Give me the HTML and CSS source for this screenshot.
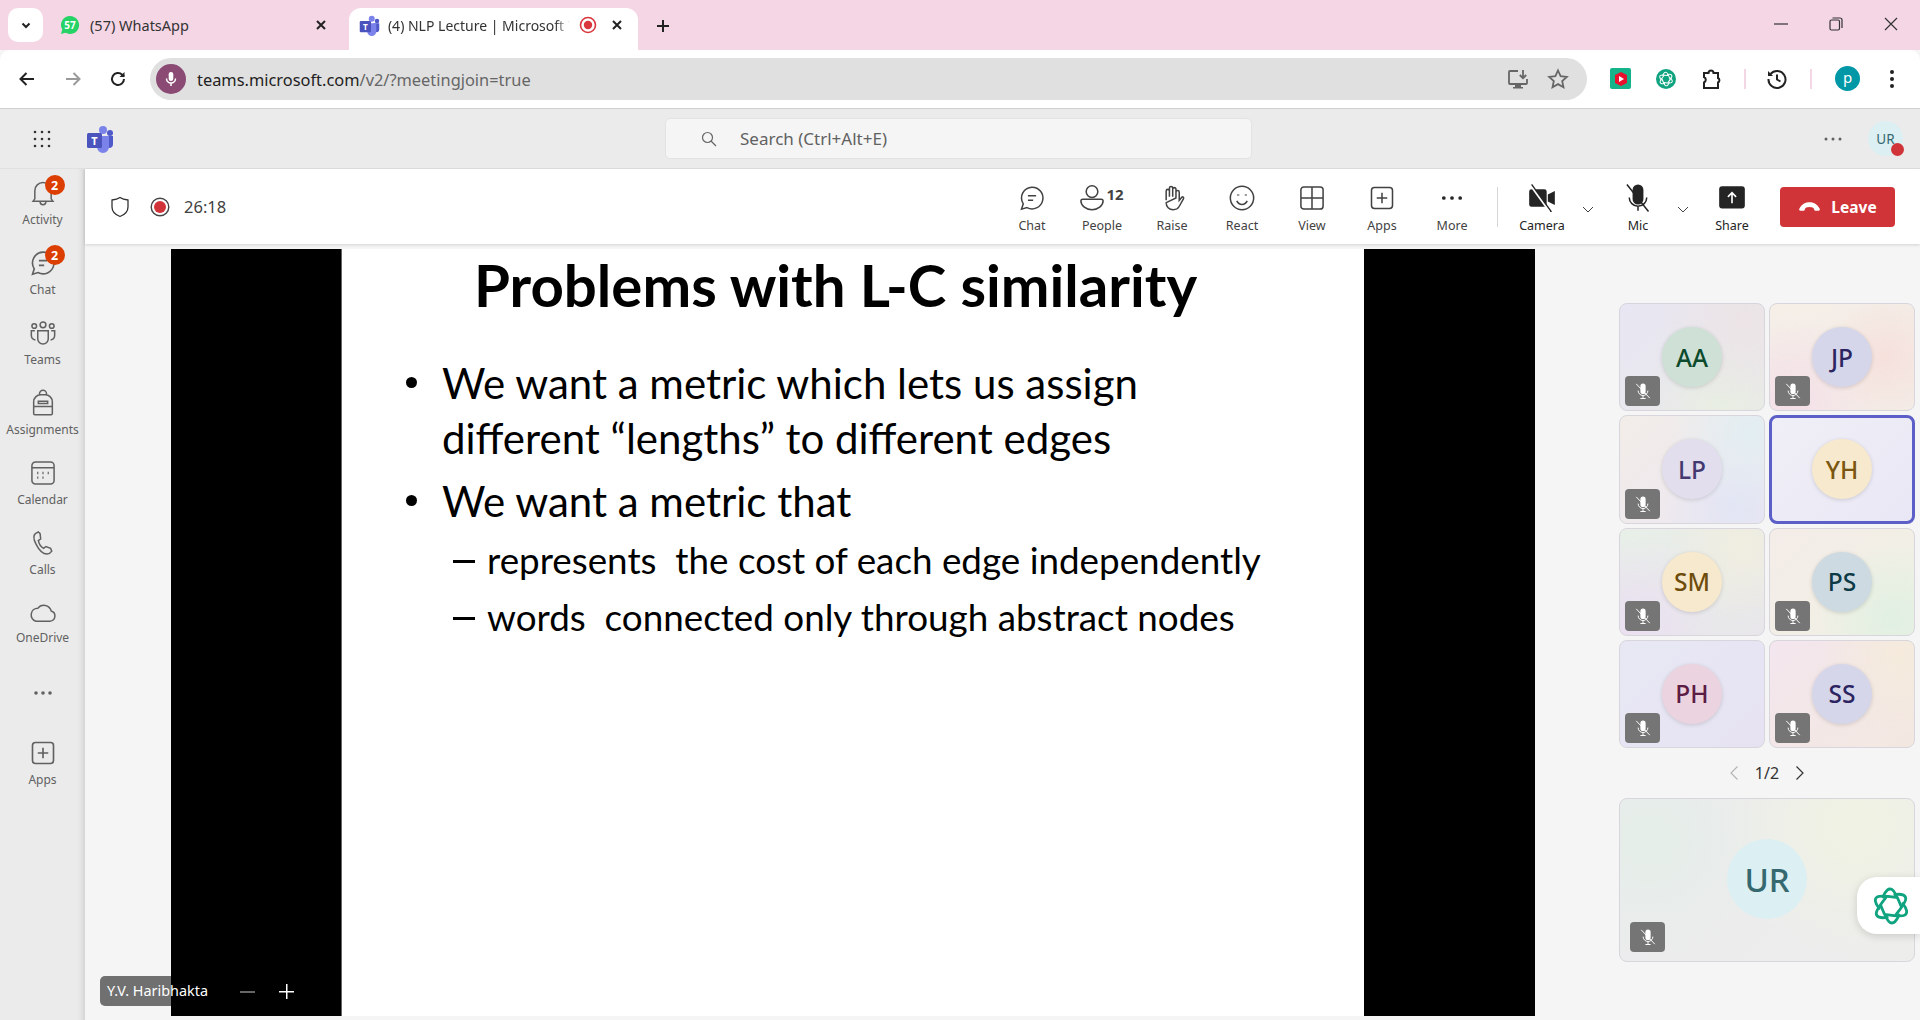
FILE: index.html
```html
<!DOCTYPE html>
<html lang="en">
<head>
<meta charset="utf-8">
<title>NLP Lecture | Microsoft Teams</title>
<link rel="stylesheet" href="styles.css">
</head>
<body>
<svg class="defs" aria-hidden="true">
  <symbol id="micoff" viewBox="0 0 24 24"><path d="M8.500 5.500a3.500 3.500 0 0 1 7 0v7a3.500 3.500 0 0 1-7 0z" fill="currentColor" stroke="none"/><path d="M5.500 11.500a6.500 6.500 0 0 0 13 0M12 18v4M8.500 22h7M3 2.500l18 19" fill="none" stroke="currentColor" stroke-width="1.300"/></symbol>
  <symbol id="chat" viewBox="0 0 24 24"><path d="M12 2.700a9.300 9.300 0 1 1-4.300 17.500l-4.700 1.400 1.500-4.600A9.300 9.300 0 0 1 12 2.700z"/><path d="M8.500 10h7M8.500 14h4.500"/></symbol>
  <symbol id="plus-box" viewBox="0 0 24 24"><rect x="3" y="3" width="18" height="18" rx="2.500"/><path d="M12 7.500v9M7.500 12h9"/></symbol>
  <symbol id="knot" viewBox="0 0 40 40"><g stroke-linecap="round"><path d="M12 11Q16 1 21 3.500Q24 5 30 20"/><path d="M12 11Q16 1 21 3.500Q24 5 30 20" transform="rotate(60 20 20)"/><path d="M12 11Q16 1 21 3.500Q24 5 30 20" transform="rotate(120 20 20)"/><path d="M12 11Q16 1 21 3.500Q24 5 30 20" transform="rotate(180 20 20)"/><path d="M12 11Q16 1 21 3.500Q24 5 30 20" transform="rotate(240 20 20)"/><path d="M12 11Q16 1 21 3.500Q24 5 30 20" transform="rotate(300 20 20)"/></g></symbol>
</svg>

<header class="tabstrip">
  <button class="tab-list"><svg class="i12" viewBox="0 0 12 12"><path d="M2.500 4.500 6 8l3.500-3.500" class="s-dark2"/></svg></button>
  <div class="tab">
    <svg class="fav" viewBox="0 0 20 20"><path d="M10 1a9 9 0 1 1-4.400 16.800L1 19l1.300-4.400A9 9 0 0 1 10 1z" fill="#25d366"/><text x="10" y="13.500" class="fav-num">57</text></svg>
    <span class="tab-title">(57) WhatsApp</span>
    <svg class="i12 tab-x" viewBox="0 0 12 12"><path d="M2 2l8 8M10 2l-8 8" class="s-dark2"/></svg>
  </div>
  <div class="tab tab-active">
    <svg class="fav-t" viewBox="0 0 28 28"><circle cx="17" cy="5" r="4" fill="#7b83eb"/><circle cx="24" cy="8" r="3" fill="#5059c9"/><path d="M19 11h8v8a4 4 0 0 1-8 0z" fill="#5059c9"/><path d="M9 11h14v11a6 6 0 0 1-12 0z" fill="#7b83eb"/><rect x="1" y="8" width="15" height="15" rx="1.500" fill="#4b53bc"/><text x="8.500" y="20" class="teams-t">T</text></svg>
    <span class="tab-title tab-fade">(4) NLP Lecture | Microsoft T</span>
    <svg class="rec" viewBox="0 0 18 18"><circle cx="9" cy="9" r="7.500" fill="none" stroke="#d9363e" stroke-width="1.600"/><circle cx="9" cy="9" r="4.200" fill="#d9363e"/></svg>
    <svg class="i12 tab-x2" viewBox="0 0 12 12"><path d="M2 2l8 8M10 2l-8 8" class="s-dark2"/></svg>
  </div>
  <svg class="i14 new-tab" viewBox="0 0 14 14"><path d="M7 1v12M1 7h12" class="s-dark2"/></svg>
  <div class="win">
    <svg class="i14" viewBox="0 0 14 14"><path d="M0 7h14" class="s-thin"/></svg>
    <svg class="i14" viewBox="0 0 14 14"><rect x="1" y="3" width="9.500" height="10" rx="1.500" class="s-thin"/><path d="M3.500 1H11a2 2 0 0 1 2 2v8" class="s-thin"/></svg>
    <svg class="i14" viewBox="0 0 14 14"><path d="M1 1l12 12M13 1 1 13" class="s-thin"/></svg>
  </div>
</header>

<nav class="toolbar">
  <svg class="nav-ic nav-back" viewBox="0 0 18 18"><path d="M16 9H3M8.500 3 2.500 9l6 6" class="s-dark2"/></svg>
  <svg class="nav-ic nav-fwd" viewBox="0 0 18 18"><path d="M2 9h13M9.500 3l6 6-6 6" class="s-grey2"/></svg>
  <svg class="nav-ic nav-rel" viewBox="0 0 18 18"><path d="M15 9a6 6 0 1 1-1.800-4.300L15 6.500" class="s-dark2"/><path d="M15.500 2v5h-5z" fill="#222"/></svg>
  <div class="omni">
    <span class="omni-mic"><svg class="i18" viewBox="0 0 18 18"><rect x="6.700" y="2" width="4.600" height="9" rx="2.300" fill="#fff"/><path d="M4.500 8.500a4.500 4.500 0 0 0 9 0M9 13v3" class="s-white"/></svg></span>
    <span class="url"><b>teams.microsoft.com</b>/v2/?meetingjoin=true</span>
    <svg class="omni-ic" viewBox="0 0 22 22"><path d="M11 3H3a1 1 0 0 0-1 1v11a1 1 0 0 0 1 1h16a1 1 0 0 0 1-1v-4" class="s-grey3"/><path d="M6 19h10v1.500H6zM8 16h6v3H8z" fill="#666"/><path d="M16 2v8M12.800 7l3.200 3.200L19.200 7" class="s-grey3"/></svg>
    <svg class="omni-ic omni-star" viewBox="0 0 22 22"><path d="m11 2.500 2.600 5.700 6.200.7-4.600 4.200 1.300 6.100-5.500-3.100-5.500 3.100 1.300-6.100-4.600-4.200 6.200-.7z" class="s-grey3"/></svg>
  </div>
  <div class="ext">
    <span class="ext-yt"><svg class="i14" viewBox="0 0 14 14"><path d="M7 0l6 3v8l-6 3-6-3V3z" fill="#e8112d"/><path d="M5 4l5 3-5 3z" fill="#fff"/></svg></span>
    <span class="ext-gpt"><svg class="knot-w"><use href="#knot"/></svg></span>
    <svg class="ext-ic" viewBox="0 0 22 22"><path d="M4 5h4.500a2.500 2.500 0 0 1 5 0H18v5a2.500 2.500 0 0 1 0 4.500V20H4v-5.500a3 3 0 0 0 0-5.500z" class="s-dark2"/></svg>
    <i class="ext-div ext-div1"></i>
    <svg class="ext-ic" viewBox="0 0 22 22"><path d="M4.500 6A8.500 8.500 0 1 1 2.500 11" class="s-dark2"/><path d="M2 3v5h5z" fill="#222"/><path d="M11 6.500V11.500l3.500 2" class="s-dark2"/></svg>
    <i class="ext-div ext-div2"></i>
    <span class="profile">p</span>
    <svg class="dots-v" viewBox="0 0 6 20"><circle cx="3" cy="3" r="2"/><circle cx="3" cy="10" r="2"/><circle cx="3" cy="17" r="2"/></svg>
  </div>
</nav>

<div class="apphead">
  <svg class="waffle" viewBox="0 0 20 20"><g class="fill-dark"><circle cx="3" cy="3" r="1.300"/><circle cx="10" cy="3" r="1.300"/><circle cx="17" cy="3" r="1.300"/><circle cx="3" cy="10" r="1.300"/><circle cx="10" cy="10" r="1.300"/><circle cx="17" cy="10" r="1.300"/><circle cx="3" cy="17" r="1.300"/><circle cx="10" cy="17" r="1.300"/><circle cx="17" cy="17" r="1.300"/></g></svg>
  <svg class="teams-logo" viewBox="0 0 28 28"><circle cx="17" cy="5" r="4" fill="#7b83eb"/><circle cx="24" cy="8" r="3" fill="#5059c9"/><path d="M19 11h8v8a4 4 0 0 1-8 0z" fill="#5059c9"/><path d="M9 11h14v11a6 6 0 0 1-12 0z" fill="#7b83eb"/><rect x="1" y="8" width="15" height="15" rx="1.500" fill="#4b53bc"/><text x="8.500" y="20" class="teams-t">T</text></svg>
  <div class="search">
    <svg class="i18" viewBox="0 0 18 18"><circle cx="7.500" cy="7.500" r="5" class="s-grey1"/><path d="m11 11 5 5" class="s-grey1"/></svg>
    <span>Search (Ctrl+Alt+E)</span>
  </div>
  <svg class="head-more" viewBox="0 0 18 4"><circle cx="2" cy="2" r="1.500"/><circle cx="9" cy="2" r="1.500"/><circle cx="16" cy="2" r="1.500"/></svg>
  <div class="head-av">UR<i class="head-dot"></i></div>
</div>

<div class="main">
  <aside class="rail">
    <div class="rail-item"><span class="rail-ic">
      <svg class="ic-28" viewBox="0 0 24 24"><path d="M5 17V10a7 7 0 0 1 14 0v7l1.500 2h-17zM9.500 19.500a2.500 2.500 0 0 0 5 0"/></svg><b class="badge">2</b></span><span class="rail-lab">Activity</span></div>
    <div class="rail-item"><span class="rail-ic"><svg class="ic-28 stroke-use"><use href="#chat"/></svg><b class="badge">2</b></span><span class="rail-lab">Chat</span></div>
    <div class="rail-item"><span class="rail-ic"><svg class="ic-28" viewBox="0 0 24 24"><circle cx="12" cy="5" r="2.500"/><circle cx="4.500" cy="6" r="2"/><circle cx="19.500" cy="6" r="2"/><path d="M7.500 10h9v7a4.500 4.500 0 0 1-9 0zM5 10H2v4a4 4 0 0 0 3.500 4M19 10h3v4a4 4 0 0 1-3.500 4"/></svg></span><span class="rail-lab">Teams</span></div>
    <div class="rail-item"><span class="rail-ic"><svg class="ic-28" viewBox="0 0 24 24"><path d="M9 5.500V4a3 3 0 0 1 6 0v1.500M4 21V11a6 6 0 0 1 6-6h4a6 6 0 0 1 6 6v10a1 1 0 0 1-1 1H5a1 1 0 0 1-1-1zM4 15h16M8 10.500h8v2H8z"/></svg></span><span class="rail-lab">Assignments</span></div>
    <div class="rail-item"><span class="rail-ic"><svg class="ic-28" viewBox="0 0 24 24"><rect x="2.500" y="2.500" width="19" height="19" rx="3"/><path d="M2.500 7.500h19"/><path d="M7 12h1M11.500 12h1M16 12h1M7 16h1M11.500 16h1" stroke-width="2"/></svg></span><span class="rail-lab">Calendar</span></div>
    <div class="rail-item"><span class="rail-ic"><svg class="ic-28" viewBox="0 0 24 24"><path d="M8 2.500 5.500 4C3.500 5.500 4 9 6 13c2.500 5 6 8.500 9.500 8.500 1.500 0 3-1 4-2.500l-1-2.500-4-1.500-2 1.500c-2-1-4-4-4.500-6.500l2-1.500L9.500 4z"/></svg></span><span class="rail-lab">Calls</span></div>
    <div class="rail-item rail-cloud"><span class="rail-ic"><svg class="ic-28" viewBox="0 0 24 24"><path d="M6 19h12a4.500 4.500 0 0 0 1-8.800A6.500 6.500 0 0 0 7.500 8 5.600 5.600 0 0 0 6 19z"/></svg></span><span class="rail-lab">OneDrive</span></div>
    <div class="rail-dots"><svg class="head-more" viewBox="0 0 18 4"><circle cx="2" cy="2" r="1.800"/><circle cx="9" cy="2" r="1.800"/><circle cx="16" cy="2" r="1.800"/></svg></div>
    <div class="rail-item rail-apps"><span class="rail-ic"><svg class="ic-28 stroke-use"><use href="#plus-box"/></svg></span><span class="rail-lab">Apps</span></div>
  </aside>

  <section class="content">
    <div class="meetbar">
      <div class="meet-left">
        <svg class="shield" viewBox="0 0 20 22"><path d="M10 1.500c2 1.500 5 2.300 8 2.500v7c0 5-4 8-8 9.500-4-1.500-8-4.500-8-9.500V4c3-.2 6-1 8-2.500z"/></svg>
        <svg class="meet-rec" viewBox="0 0 20 20"><circle cx="10" cy="10" r="8.800" fill="none" stroke="#444" stroke-width="1.400"/><circle cx="10" cy="10" r="6" fill="#d13438"/></svg>
        <span class="timer">26:18</span>
      </div>
      <div class="meet-right">
        <div class="mt"><svg class="mt-ic stroke-use"><use href="#chat"/></svg><span>Chat</span></div>
        <div class="mt"><span class="mt-top"><svg class="mt-ic" viewBox="0 0 24 24"><circle cx="12" cy="6.500" r="5"/><path d="M2.500 14.500a1.500 1.500 0 0 1 1.500-1.500h16a1.500 1.500 0 0 1 1.500 1.500c0 4-4.500 7.500-9.500 7.500s-9.500-3.500-9.500-7.500z"/></svg><b class="count">12</b></span><span>People</span></div>
        <div class="mt"><svg class="mt-ic" viewBox="0 0 24 24"><path d="M7 14V6a1.400 1.400 0 0 1 2.800 0v5M9.800 11V3.500a1.400 1.400 0 0 1 2.800 0V11M12.600 11V4.500a1.400 1.400 0 0 1 2.800 0V12M15.400 12V7a1.400 1.400 0 0 1 2.800 0v7l2-2.500c1-1 2.300 0 1.600 1.200L18 19.500c-1 1.800-2.500 2.500-5 2.500-3.500 0-6-2.500-6-6z"/></svg><span>Raise</span></div>
        <div class="mt"><svg class="mt-ic" viewBox="0 0 24 24"><circle cx="12" cy="12" r="10"/><path d="M7.500 14.500c1 2 2.700 3 4.500 3s3.500-1 4.500-3"/><path d="M8.700 9v.8M15.300 9v.8" stroke-width="2"/></svg><span>React</span></div>
        <div class="mt"><svg class="mt-ic" viewBox="0 0 24 24"><rect x="2.500" y="2.500" width="19" height="19" rx="2.500"/><path d="M12 2.500v19M2.500 12h19"/></svg><span>View</span></div>
        <div class="mt"><svg class="mt-ic stroke-use"><use href="#plus-box"/></svg><span>Apps</span></div>
        <div class="mt"><svg class="mt-ic mt-solid" viewBox="0 0 24 24"><circle cx="5" cy="12" r="1.600"/><circle cx="12" cy="12" r="1.600"/><circle cx="19" cy="12" r="1.600"/></svg><span>More</span></div>
        <i class="mt-div"></i>
        <div class="mt mt-cam"><svg class="mt-ic mt-solid" viewBox="0 0 24 24"><path d="M1 6.500a2 2 0 0 1 2-2h11a2 2 0 0 1 2 2v11a2 2 0 0 1-2 2H3a2 2 0 0 1-2-2zM17 9l6-3v12l-6-3z"/><path d="M3 .5 20 24" class="cut"/><path d="M1.500 .5 18.500 24" class="cut-w"/></svg><span>Camera</span></div>
        <svg class="mt-chev" viewBox="0 0 12 8"><path d="M1 1l5 5 5-5"/></svg>
        <div class="mt mt-mic"><svg class="mt-ic" viewBox="0 0 24 24"><path d="M8 5a4 4 0 0 1 8 0v8a4 4 0 0 1-8 0z" class="mic-f"/><path d="M4.500 11.500a7.500 7.500 0 0 0 15 0M12 19v4M2.500 .5 21 23.500"/></svg><span>Mic</span></div>
        <svg class="mt-chev" viewBox="0 0 12 8"><path d="M1 1l5 5 5-5"/></svg>
        <div class="mt mt-share"><svg class="mt-ic mt-solid" viewBox="0 0 24 24"><rect x="1" y="2" width="22" height="19" rx="2.500" fill="#242424"/><path d="M12 16.500v-9M8.500 11 12 7.500l3.500 3.500" class="arrow-w"/></svg><span>Share</span></div>
        <button class="leave"><svg class="leave-ic" viewBox="0 0 24 14"><path d="M1 9.500C4 4 8 2.500 12 2.500S20 4 23 9.500c.5 1-.1 2-1.200 2h-3.100c-.9 0-1.500-.5-1.700-1.400-.4-1.700-2-2.500-5-2.500s-4.600.8-5 2.500c-.2.900-.8 1.400-1.700 1.400H2.200c-1.100 0-1.700-1-1.200-2z"/></svg>Leave</button>
      </div>
    </div>

    <div class="stage">
      <div class="video">
        <div class="slide">
          <h1>Problems with L-C similarity</h1>
          <ul>
            <li class="l1">We want a metric which lets us assign<br>different “lengths” to different edges</li>
            <li class="l1 l1b">We want a metric that
              <ul>
                <li class="l2">represents&nbsp; the cost of each edge independently</li>
                <li class="l2">words&nbsp; connected only through abstract nodes</li>
              </ul>
            </li>
          </ul>
        </div>
      </div>
      <div class="name-tag">Y.V. Haribhakta</div>
      <div class="zoom-ctl"><i class="z-minus"></i><i class="z-plus"></i></div>

      <div class="side">
        <div class="grid">
          <div class="tile g1"><span class="av a-aa">AA</span><span class="mute"><svg class="mute-ic"><use href="#micoff"/></svg></span></div>
          <div class="tile g2"><span class="av a-jp">JP</span><span class="mute"><svg class="mute-ic"><use href="#micoff"/></svg></span></div>
          <div class="tile g3"><span class="av a-lp">LP</span><span class="mute"><svg class="mute-ic"><use href="#micoff"/></svg></span></div>
          <div class="tile g4 speaking"><span class="av a-yh">YH</span></div>
          <div class="tile g5"><span class="av a-sm">SM</span><span class="mute"><svg class="mute-ic"><use href="#micoff"/></svg></span></div>
          <div class="tile g6"><span class="av a-ps">PS</span><span class="mute"><svg class="mute-ic"><use href="#micoff"/></svg></span></div>
          <div class="tile g7"><span class="av a-ph">PH</span><span class="mute"><svg class="mute-ic"><use href="#micoff"/></svg></span></div>
          <div class="tile g8"><span class="av a-ss">SS</span><span class="mute"><svg class="mute-ic"><use href="#micoff"/></svg></span></div>
        </div>
        <div class="pager">
          <svg class="pg-ic pg-off" viewBox="0 0 10 16"><path d="M8.500 1.500 2 8l6.500 6.500"/></svg>
          <span>1/2</span>
          <svg class="pg-ic" viewBox="0 0 10 16"><path d="M1.500 1.500 8 8l-6.500 6.500"/></svg>
        </div>
        <div class="tile self g9"><span class="av av-big">UR</span><span class="mute"><svg class="mute-ic"><use href="#micoff"/></svg></span></div>
      </div>
      <div class="gpt-float"><svg class="gpt-ic"><use href="#knot"/></svg></div>
    </div>
  </section>
</div>
</body>
</html>
```
FILE: styles.css
```css
* { box-sizing: border-box; }
html, body { margin: 0; height: 1020px; overflow: hidden; }
body { display: flex; flex-direction: column; font-family: "Noto Sans", "Open Sans", sans-serif; color: #242424; background: #f5f5f5; }
.defs { position: absolute; width: 0; height: 0; }
i { display: block; }
svg { display: block; flex: none; }
button { border: 0; padding: 0; font: inherit; }

.s-dark2 { fill: none; stroke: #222; stroke-width: 2; }
.s-grey2 { fill: none; stroke: #9a9a9a; stroke-width: 2; }
.s-grey3 { fill: none; stroke: #666; stroke-width: 1.800; }
.s-grey1 { fill: none; stroke: #666; stroke-width: 1.200; }
.s-white { fill: none; stroke: #fff; stroke-width: 1.500; }
.s-thin { fill: none; stroke: #333; stroke-width: 1.200; }
.fill-dark { fill: #333; }
.i12 { width: 12px; height: 12px; }
.i14 { width: 14px; height: 14px; }
.i18 { width: 18px; height: 18px; }

/* Tab strip */
.tabstrip { height: 50px; flex: none; background: #f5d6e5; display: flex; align-items: flex-end; position: relative; }
.tab-list { width: 35px; height: 34px; margin: 0 0 8px 8px; background: #fff; border-radius: 10px; display: flex; align-items: center; justify-content: center; }
.tab { display: flex; align-items: center; height: 42px; padding-bottom: 8px; font-size: 14.500px; color: #333; }
.fav { width: 20px; height: 20px; margin-left: 17px; }
.fav-num { font: 700 10px "Noto Sans", sans-serif; fill: #fff; text-anchor: middle; }
.tab-title { margin-left: 10px; white-space: nowrap; }
.tab-x { margin-left: 126px; margin-right: 22px; }
.tab-active { width: 289px; background: #fff; border-radius: 12px 12px 0 0; padding-left: 10px; }
.fav-t { width: 21px; height: 21px; }
.tab-fade { width: 182px; margin-left: 8px; font-size: 14px; -webkit-mask-image: linear-gradient(90deg, #000 92%, transparent 100%); mask-image: linear-gradient(90deg, #000 92%, transparent 100%); }
.teams-t { font: 700 11px "Noto Sans", sans-serif; fill: #fff; text-anchor: middle; }
.rec { width: 18px; height: 18px; margin-left: 9px; }
.tab-x2 { margin-left: 14px; }
.new-tab { margin: 0 0 17px 18px; }
.win { margin-left: auto; display: flex; align-items: center; gap: 41px; height: 48px; align-self: flex-start; padding-right: 22px; }

/* Browser toolbar */
.toolbar { height: 59px; flex: none; background: #fff; border-bottom: 1px solid #cfcfcf; border-radius: 10px 10px 0 0; display: flex; align-items: center; padding-bottom: 1px; }
.nav-ic { width: 18px; height: 18px; }
.nav-back { margin-left: 18px; }
.nav-fwd { margin-left: 28px; }
.nav-rel { margin-left: 27px; }
.omni { width: 1437px; height: 42px; margin-left: 23px; background: #e0e0e0; border-radius: 21px; display: flex; align-items: center; padding: 0 18px 0 6px; }
.omni-mic { width: 30px; height: 30px; border-radius: 50%; background: #8a4a74; display: flex; align-items: center; justify-content: center; }
.url { margin-left: 11px; font-size: 16.400px; color: #666; padding-top: 2px; }
.url b { font-weight: 400; color: #222; }
.omni-ic { width: 22px; height: 22px; margin-left: auto; }
.omni-star { margin-left: 18px; }
.ext { flex: 1; display: flex; align-items: center; }
.ext-yt { width: 21px; height: 21px; background: #14b38a; border-radius: 2px; margin-left: 23px; display: flex; align-items: center; justify-content: center; }
.ext-gpt { width: 20px; height: 20px; background: #10a37f; border-radius: 50%; margin-left: 25px; margin-right: 24px; display: flex; align-items: center; justify-content: center; }
.knot-w { width: 16px; height: 16px; fill: none; stroke: #fff; stroke-width: 2.600; }
.ext-ic { width: 22px; height: 22px; }
.ext-div { width: 2px; height: 20px; background: #f5d6e5; }
.ext-div1 { margin: 0 20px 0 22px; }
.ext-div2 { margin: 0 24px 0 22px; }
.profile { width: 25px; height: 25px; border-radius: 50%; background: #0097a7; color: #fff; font-size: 15px; display: flex; align-items: center; justify-content: center; margin-left: -1px; padding-bottom: 3px; }
.dots-v { width: 6px; height: 20px; margin-left: 29px; fill: #222; }

/* Teams app header */
.apphead { height: 60px; flex: none; background: #ebebeb; border-bottom: 1px solid #e0e0e0; display: flex; align-items: center; }
.waffle { width: 20px; height: 20px; margin-left: 32px; }
.teams-logo { width: 28px; height: 28px; margin-left: 34px; }
.search { width: 587px; height: 41px; margin-left: 551px; background: #f5f5f5; border: 1px solid #e3e3e3; border-radius: 5px; display: flex; align-items: center; padding-left: 34px; gap: 22px; font-size: 17px; color: #616161; }
.head-more { width: 18px; height: 4px; fill: #616161; }
.apphead > .head-more { margin-left: 572px; }
.head-av { width: 35px; height: 35px; margin-left: 26px; border-radius: 50%; background: #dceff2; color: #35686f; font-size: 13.500px; display: flex; align-items: center; justify-content: center; position: relative; }
.head-dot { position: absolute; width: 13px; height: 13px; border-radius: 50%; background: #d13438; right: -1px; bottom: 0; }

/* Main */
.main { flex: 1; display: flex; min-height: 0; }
.rail { width: 85px; flex: none; background: #ebebeb; box-shadow: inset -8px 0 7px -7px rgba(0,0,0,.16); display: flex; flex-direction: column; }
.rail-item { height: 70px; padding-top: 10px; display: flex; flex-direction: column; align-items: center; gap: 5px; }
.rail-ic { position: relative; width: 28px; height: 28px; }
.ic-28 { width: 28px; height: 28px; fill: none; stroke: #616161; stroke-width: 1.300; }
.stroke-use { fill: none; stroke: currentColor; stroke-width: 1.400; color: #424242; }
.rail .stroke-use { color: #616161; }
.rail-lab { font-size: 12px; line-height: 16px; color: #616161; white-space: nowrap; }
.rail-cloud { gap: 3px; }
.badge { position: absolute; top: -4px; right: -8px; width: 20px; height: 20px; border-radius: 50%; background: #dc3e00; color: #fff; font-size: 12.500px; display: flex; align-items: center; justify-content: center; }
.rail-dots { height: 32px; margin-top: 18px; display: flex; align-items: center; justify-content: center; }
.rail-apps { margin-top: 20px; }

.content { flex: 1; min-width: 0; display: flex; flex-direction: column; }
.meetbar { height: 75px; flex: none; background: #fff; box-shadow: 0 1px 3px rgba(0,0,0,.14); display: flex; align-items: center; justify-content: space-between; padding: 0 25px; position: relative; z-index: 1; }
.meet-left { display: flex; align-items: center; }
.shield { width: 20px; height: 22px; fill: none; stroke: #333; stroke-width: 1.300; }
.meet-rec { width: 20px; height: 20px; margin-left: 20px; }
.timer { font-size: 16.500px; color: #424242; margin-left: 14px; }
.meet-right { display: flex; align-items: center; height: 100%; }
.mt { width: 70px; display: flex; flex-direction: column; align-items: center; gap: 5px; font-size: 12.500px; line-height: 17px; color: #424242; padding-top: 4px; }
.mt-ic { width: 28px; height: 28px; fill: none; stroke: #424242; stroke-width: 1.300; }
.mt-top { display: flex; align-items: center; height: 28px; position: relative; margin-left: -21px; }
.count { position: absolute; left: 29px; top: 2px; font-size: 15px; color: #424242; }
.mt-solid { fill: #242424; stroke: none; }
.mt-div { width: 1px; height: 40px; background: #d6d6d6; margin: 0 9px 0 10px; }
.cut { stroke: #242424; stroke-width: 1.400; }
.cut-w { stroke: #fff; stroke-width: 1.400; }
.mic-f { fill: #242424; }
.arrow-w { fill: none; stroke: #fff; stroke-width: 1.400; }
.mt-chev { width: 22px; height: 8px; fill: none; stroke: #424242; stroke-width: 1; margin-top: 6px; }
.mt-cam, .mt-mic, .mt-share { color: #242424; }
.mt-mic { width: 68px; margin-left: 5px; }
.mt-share { width: 76px; }
.mt-mic .mt-ic { stroke: #242424; }
.leave { width: 115px; height: 40px; margin-left: 10px; border-radius: 4px; background: #d13438; color: #fff; font-weight: 700; font-size: 15.500px; display: flex; align-items: center; justify-content: center; gap: 10px; }
.leave-ic { width: 23px; height: 13px; fill: #fff; }

/* Stage */
.stage { flex: 1; display: flex; min-height: 0; position: relative; padding: 5px 5px 4px 86px; background: #f5f5f5; }
.video { width: 1364px; background: #000; padding: 0 171px 0 170px; flex: none; }
.slide { height: 100%; background: #fff; color: #000; font-family: Lato, "Carlito", sans-serif; border-left: 1px solid #666; padding-left: 64px; }
.slide h1 { margin: 0 0 0 68px; font-size: 58.200px; line-height: 60px; font-weight: 700; padding-top: 6px; white-space: nowrap; }
.slide ul { list-style: none; margin: 0; padding: 0; }
.l1 { position: relative; font-size: 42px; line-height: 55px; margin-top: 41px; padding-left: 36px; white-space: nowrap; }
.l1::before { content: ""; position: absolute; left: 0; top: 21px; width: 11px; height: 11px; border-radius: 50%; background: #000; }
.l1b { margin-top: 8px; }
.l2 { position: relative; font-size: 36.800px; line-height: 57px; padding-left: 45px; }
.l2::before { content: ""; position: absolute; left: 11px; top: 28px; width: 22px; height: 3px; background: #000; }
.l1b ul { margin-top: 3px; }

.name-tag { position: absolute; left: 15px; bottom: 14px; width: 71px; height: 30px; background: #707070; border-radius: 5px 0 0 5px; color: #fff; font-size: 14.400px; line-height: 30px; padding-left: 7px; white-space: nowrap; }
.zoom-ctl { position: absolute; left: 155px; bottom: 21px; display: flex; align-items: center; gap: 24px; }
.z-minus { width: 15px; height: 2px; background: #666; }
.z-plus { width: 15px; height: 15px; background: linear-gradient(#fff,#fff) center/100% 1.500px no-repeat, linear-gradient(#fff,#fff) center/1.500px 100% no-repeat; }

/* Side column */
.side { width: 296px; margin-left: 84px; padding-top: 54px; flex: none; }
.grid { display: grid; grid-template-columns: 146px 146px; grid-auto-rows: 108.250px; gap: 4px; }
.tile { position: relative; border: 1px solid #d8d6dc; border-radius: 8px; display: flex; align-items: center; justify-content: center; }
.speaking { border: 3px solid #5b5fc7; }
.av { width: 60px; height: 60px; border-radius: 50%; font-size: 24.500px; font-weight: 500; display: flex; align-items: center; justify-content: center; box-shadow: 0 1px 4px rgba(0,0,0,.14); }
.av-big { width: 80px; height: 80px; font-size: 33px; background: #dceff2; color: #35686f; box-shadow: none; margin-top: -2px; }
.mute { position: absolute; left: 5px; bottom: 4px; width: 35px; height: 30px; border-radius: 4px; background: #757575; color: #fff; display: flex; align-items: center; justify-content: center; }
.mute-ic { width: 18px; height: 18px; }
.self { height: 164px; }
.self .mute { left: 10px; bottom: 9px; }
.a-aa { background: #cfe0d6; color: #0c4a2c; }
.a-jp { background: #d6d6ea; color: #2b2461; }
.a-lp { background: #e2deee; color: #43386f; }
.a-yh { background: #f7e9cd; color: #7a5610; }
.a-sm { background: #f7e9cd; color: #6e4c0c; }
.a-ps { background: #cddae2; color: #0e3a46; }
.a-ph { background: #ebd3e0; color: #5c1c44; }
.a-ss { background: #d6d6ea; color: #2b2461; }
.g1 { background: radial-gradient(circle at 85% 15%, #ece4e6, transparent 55%), radial-gradient(circle at 70% 100%, #e8eee2, transparent 55%), linear-gradient(135deg, #e8e6f2, #e9e8ea); }
.g2 { background: radial-gradient(circle at 80% 50%, #f6e0dc, transparent 50%), radial-gradient(circle at 15% 90%, #f4dfe8, transparent 55%), linear-gradient(135deg, #f5efe8, #f3ece6); }
.g3 { background: radial-gradient(circle at 90% 15%, #e2eef2, transparent 50%), radial-gradient(circle at 80% 85%, #e2e5f4, transparent 50%), linear-gradient(135deg, #f2ede8, #ece6f2); }
.g4 { background: linear-gradient(135deg, #f0eff6, #e9e7f5); }
.g5 { background: radial-gradient(circle at 10% 90%, #eadff2, transparent 55%), radial-gradient(circle at 85% 15%, #f0eee0, transparent 50%), linear-gradient(135deg, #e8efe8, #e8e6ea); }
.g6 { background: radial-gradient(circle at 85% 85%, #e0f0e2, transparent 50%), linear-gradient(135deg, #f4ece8, #f0f1e4); }
.g7 { background: linear-gradient(135deg, #e8e8f4, #e6e2f2); }
.g8 { background: radial-gradient(circle at 90% 15%, #f5ebdc, transparent 50%), linear-gradient(135deg, #f3e6ee, #f3e8e0); }
.g9 { background: radial-gradient(circle at 80% 15%, #f0f3e2, transparent 50%), radial-gradient(circle at 10% 25%, #e4eee8, transparent 45%), linear-gradient(135deg, #ecebee, #ededec); }
.pager { height: 50px; display: flex; align-items: center; justify-content: center; gap: 16px; font-size: 16px; color: #333; }
.pg-ic { width: 10px; height: 16px; fill: none; stroke: #333; stroke-width: 1.200; }
.pg-off { stroke: #b5b5b5; }
.gpt-float { position: absolute; right: 0; top: 633px; width: 63px; height: 57px; background: #fff; border-radius: 20px 0 0 20px; box-shadow: 0 2px 8px rgba(0,0,0,.15); display: flex; align-items: center; padding-left: 14px; z-index: 3; }
.gpt-ic { width: 40px; height: 40px; fill: none; stroke: #10a37f; stroke-width: 2.800; }
```
